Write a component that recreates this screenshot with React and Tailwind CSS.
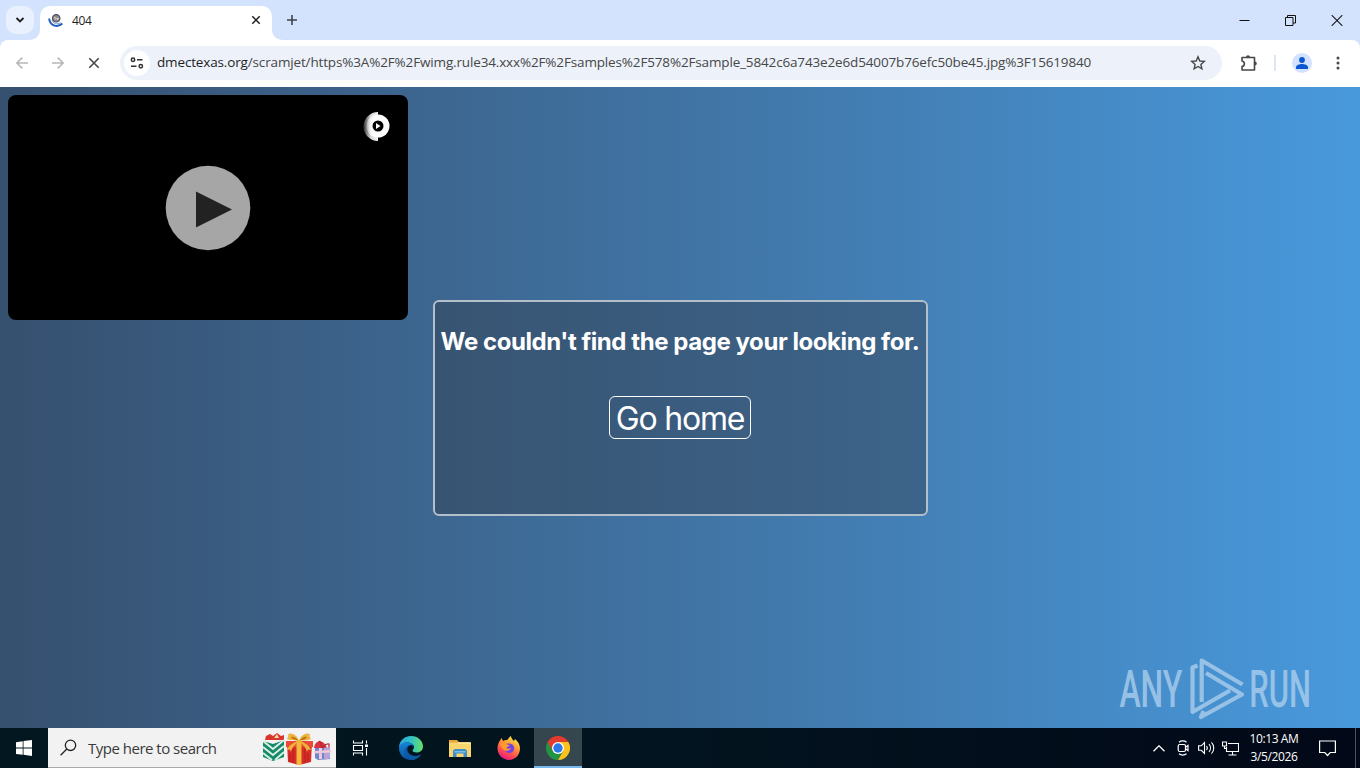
import React from 'react';

const URL_HOST = 'dmectexas.org';
const URL_PATH =
    '/scramjet/https%3A%2F%2Fwimg.rule34.xxx%2F%2Fsamples%2F578%2Fsample_5842c6a743e2e6d54007b76efc50be45.jpg%3F15619840';

function Favicon() {
    return (
        <svg width="16" height="16" viewBox="0 0 16 16" fill="none">
            <path d="M1.200 6.500C1.500 13 9 16.500 14.300 11.500" stroke="#1f5fc0" strokeWidth="2" />
            <path d="M4 8c1 4 5.500 5 8.500 2.500" stroke="#7d97c4" strokeWidth="1" />
            <circle cx="8.200" cy="6.300" r="3.700" fill="#8b8a92" stroke="#4c5160" strokeWidth="1.200" />
            <path d="M6 4.500l2.500 1.500L7 8z" fill="#e6c9a0" />
            <circle cx="9.600" cy="6.800" r="1.100" fill="#d5d9e0" />
        </svg>
    );
}

function TabStrip() {
    return (
        <div className="flex h-10 items-start bg-[#d3e3fd]">
            <button className="mt-1.5 ml-1.5 flex size-7 items-center justify-center rounded-[10px] bg-[#e9f1fe]">
                <svg width="10" height="8" viewBox="0 0 10 8" fill="none" stroke="#1f1f1f" strokeWidth="1.8">
                    <path d="M1.500 2L5 5.500 8.500 2" />
                </svg>
            </button>
            <div className="relative mt-1.5 ml-1.5 flex h-[34px] w-[232px] items-center rounded-t-[10px] bg-white pr-[11px] pb-1.5 pl-2">
                <svg className="absolute bottom-0 -left-2.5" width="10" height="10">
                    <path d="M10 0v10H0A10 10 0 0 0 10 0z" fill="#fff" />
                </svg>
                <svg className="absolute -right-2.5 bottom-0" width="10" height="10">
                    <path d="M0 0v10h10A10 10 0 0 1 0 0z" fill="#fff" />
                </svg>
                <Favicon />
                <span className="ml-2 flex-1 pt-px text-[12px] tracking-[-0.4px] text-[#1f1f1f]">404</span>
                <svg width="10" height="10" viewBox="0 0 10 10" stroke="#1f1f1f" strokeWidth="1.500">
                    <path d="M1.300 1.300l7.400 7.400M8.700 1.300L1.300 8.700" />
                </svg>
            </div>
            <svg className="mt-[15px] ml-[15px]" width="10" height="10" viewBox="0 0 10 10" stroke="#3f4246" strokeWidth="1.6">
                <path d="M5 0v10M0 5h10" />
            </svg>
            <div className="mt-[15px] mr-[17px] ml-auto flex items-center gap-[35px]">
                <svg width="11" height="11" viewBox="0 0 11 11" stroke="#111" fill="none">
                    <path d="M0.500 5.500h10" />
                </svg>
                <svg width="11" height="11" viewBox="0 0 11 11" stroke="#111" fill="none">
                    <path d="M.5 2.500h7.500v8H.5zM2.500 2.500v-2h8v7.500h-2.500" />
                </svg>
                <svg width="12" height="11" viewBox="0 0 12 11" stroke="#111" strokeWidth="1.1" fill="none">
                    <path d="M.7.200l10.600 10.600M11.300.200L.7 10.800" />
                </svg>
            </div>
        </div>
    );
}

function Toolbar() {
    return (
        <div className="bg-[#d3e3fd]">
            <div className="flex h-[47px] items-center rounded-t-[8px] bg-white pr-[17px] pb-0.5 pl-4">
                <svg width="12" height="12" viewBox="0 0 12 12" fill="none" stroke="#b4b6b9" strokeWidth="1.5">
                    <path d="M6.300.600L.9 6l5.400 5.400M1 6h11" />
                </svg>
                <svg className="ml-6" width="12" height="12" viewBox="0 0 12 12" fill="none" stroke="#b4b6b9" strokeWidth="1.5">
                    <path d="M5.700.600L11.100 6l-5.400 5.400M11 6H0" />
                </svg>
                <svg className="ml-6" width="12" height="12" viewBox="0 0 12 12" stroke="#474747" strokeWidth="1.6">
                    <path d="M1.300 1.300l9.400 9.400M10.700 1.300l-9.400 9.400" />
                </svg>
                <div className="ml-5 flex h-[34px] w-[1102px] items-center rounded-full bg-[#edf2fa] pr-4 pl-1">
                    <div className="flex size-[26px] items-center justify-center rounded-full bg-white">
                        <svg width="14" height="12" viewBox="0 0 14 12" fill="none" stroke="#303134" strokeWidth="1.500">
                            <circle cx="3" cy="2.700" r="1.700" />
                            <path d="M7 2.700h5.500M1 9.300h5.500" />
                            <circle cx="10.800" cy="9.300" r="1.700" />
                        </svg>
                    </div>
                    <div className="ml-[7px] flex flex-1 items-center pb-0.5">
                        <span className="text-[13.5px] leading-[18px] tracking-[-0.15px] whitespace-nowrap text-[#474747]">
                            <span className="text-[#1f1f1f]">{URL_HOST}</span>
                            {URL_PATH}
                        </span>
                    </div>
                    <svg width="16" height="16" viewBox="0 0 16 16" fill="none" stroke="#474747" strokeWidth="1.400">
                        <path d="M8 1.800l1.800 4.200 4.500.400-3.400 3 1 4.500L8 11.500l-3.900 2.400 1-4.500-3.400-3 4.500-.400z" />
                    </svg>
                </div>
                <svg className="ml-[18px]" width="18" height="18" viewBox="0 0 18 18" fill="none">
                    <path
                        d="M2 3.500h12.500v12.500H2V12.500c3.200-.500 3.200-5 0-5.500z"
                        stroke="#474747"
                        strokeWidth="1.600"
                        strokeLinejoin="round"
                    />
                    <path d="M6 3.300a2 2 0 0 1 4 0zM14.800 7.500a2 2 0 0 1 0 4z" fill="#474747" />
                </svg>
                <div className="ml-4 h-4 w-0.5 bg-[#dfe6f3]" />
                <div className="ml-4 flex size-5 items-center justify-center rounded-full bg-[#d3e3fd]">
                    <svg width="14" height="14" viewBox="0 0 14 14" fill="#0b57d0">
                        <circle cx="7" cy="4" r="2.900" />
                        <path d="M1 13v-1.600C1 9 4.500 8 7 8s6 1 6 3.400V13z" />
                    </svg>
                </div>
                <svg className="ml-6" width="4" height="16" viewBox="0 0 4 16" fill="#474747">
                    <circle cx="2" cy="2.900" r="1.500" />
                    <circle cx="2" cy="8" r="1.500" />
                    <circle cx="2" cy="13.100" r="1.500" />
                </svg>
            </div>
        </div>
    );
}

function VideoPlayer() {
    return (
        <div className="absolute top-2 left-2 flex h-[225px] w-[400px] items-center justify-center rounded-[8px] bg-black">
            <svg width="86" height="86" viewBox="0 0 86 86">
                <circle cx="43" cy="43" r="42.300" fill="#a6a6a6" />
                <path d="M31 26.500v36l36-18z" fill="#222" />
            </svg>
            <svg className="absolute top-4 right-4" width="32" height="32" viewBox="0 0 32 32">
                <defs>
                    <linearGradient id="discFade">
                        <stop offset="0" stopColor="#fff" stopOpacity="0.200" />
                        <stop offset="0.500" stopColor="#fff" stopOpacity="0.850" />
                        <stop offset="1" stopColor="#fff" stopOpacity="0.950" />
                    </linearGradient>
                    <linearGradient id="discCore">
                        <stop offset="0" stopColor="#fff" stopOpacity="0.300" />
                        <stop offset="0.300" stopColor="#fff" />
                    </linearGradient>
                </defs>
                <path d="M18 1v29A14.500 14.500 0 0 1 18 1z" fill="url(#discFade)" />
                <circle cx="18" cy="15" r="11.500" fill="url(#discCore)" />
                <circle cx="18" cy="15" r="5.500" fill="#000" />
                <path d="M16 12v6l4.500-3z" fill="#fff" />
            </svg>
        </div>
    );
}

function AnyRunLogo() {
    return (
        <svg
            className="absolute right-[45px] bottom-2 overflow-visible"
            width="200"
            height="64"
            viewBox="0 0 200 64"
            fill="none"
            opacity="0.7"
        >
            {/* condensed lettering on both sides of the play mark */}
            <g transform="scale(0.63 1)" fontFamily="Roboto, sans-serif" fontSize="51" fontWeight="500" fill="#b9d6f0">
                <text x="7" y="51" textLength="100" lengthAdjust="spacingAndGlyphs">
                    ANY
                </text>
                <text x="213" y="51" textLength="98" lengthAdjust="spacingAndGlyphs">
                    RUN
                </text>
            </g>
            <g stroke="#b9d6f0" strokeWidth="4.200" strokeLinejoin="round">
                <path d="M86.700 46V4.500L127.500 28.500" />
                <path d="M82.500 9.500l-5 2v44.500L115 34.500" />
                <path d="M91 17l36 21.500L86 61l2.500-6" />
            </g>
        </svg>
    );
}

function NotFoundPage() {
    return (
        <div className="relative flex h-[641px] items-center justify-center bg-linear-to-r from-[#36506f] to-[#4899dc] font-['Inter',sans-serif] text-white">
            <VideoPlayer />
            <div className="flex h-[216px] w-[495px] flex-col items-center rounded-[6px] border-2 border-[#b3bfca] bg-[#333a46]/40">
                <h1 className="mt-6 text-2xl leading-8 font-bold tracking-[-0.44px] whitespace-nowrap">
                    We couldn't find the page your looking for.
                </h1>
                <button className="mt-[38px] flex h-[43px] w-[142px] items-center justify-center rounded-[6px] border border-white pt-[3px] text-[32px] leading-none tracking-[-1.2px] whitespace-nowrap">
                    Go home
                </button>
            </div>
            <AnyRunLogo />
        </div>
    );
}

function Gifts() {
    return (
        <svg width="70" height="34" viewBox="0 0 70 34">
            <path d="M3 9l1-4 4-2 3 2 4-3 4 3 3-1v5z" fill="#d8352c" />
            <path d="M12 7l3-4 2 4z" fill="#f3d9a0" />
            <path d="M1 10l10 3 11-4v17l-11 4-10-4z" fill="#16886c" />
            <path d="M1 10l10 8 11-9M1 16l10 8 11-9M1 22l9 7M22 21l-9 8" stroke="#d8f1df" strokeWidth="2" fill="none" />
            <path d="M52 17c1-9 10-9 13 0z" fill="#d9343f" />
            <path d="M60 17c-1-4-1-6-3-7M60 17c3-3 4-5 7-4v5" stroke="#b52335" strokeWidth="1.200" fill="none" />
            <path d="M53 17h15v11l-12 1-3-2z" fill="#6f86cf" />
            <path d="M62 17l6-1v11l-6 2z" fill="#b9a4da" />
            <path d="M57 17h3v11h-3zM52 20l17-1v2.500l-17 1z" fill="#f1c9d8" />
            <path d="M25 11h25l-1 20-12 3-11-3z" fill="#d92b27" />
            <path d="M24 10h27v6H24z" fill="#ec4b33" />
            <path d="M34.500 9h5v25h-5z" fill="#f2b840" />
            <path d="M37 10c-2-6-7-9-11-7 1 2 0 3-1 5 4 2 8 1 12 2zM37 10c2-6 7-9 11-7-1 2 0 3 1 5-4 2-8 1-12 2z" fill="#eeb23d" />
            <path d="M29 6c3-1 5 1 7 3-3 0-5 0-7-3zM45 6c-3-1-5 1-7 3 3 0 5 0 7-3z" fill="#b87917" />
            <path d="M36 10c-5 2-9 4-11 9l3-.5 1 2.500c1-5 5-8 8-11zM38 10c5 2 9 4 11 9l-3-.5-1 2.500c-1-5-5-8-8-11z" fill="#eeb23d" />
            <path d="M28 22v9M31 18v14M43 18v14M46 22v9" stroke="#a91b1f" strokeWidth="0.800" />
        </svg>
    );
}

function EdgeIcon() {
    return (
        <svg width="24" height="24" viewBox="0 0 24 24">
            <defs>
                <linearGradient id="edgeTop">
                    <stop offset="0" stopColor="#2aa6de" />
                    <stop offset="0.500" stopColor="#31c0c5" />
                    <stop offset="1" stopColor="#6adf66" />
                </linearGradient>
                <linearGradient id="edgeBody" x2="0" y2="1">
                    <stop offset="0" stopColor="#1787d9" />
                    <stop offset="1" stopColor="#0d4f9e" />
                </linearGradient>
            </defs>
            <path d="M0 12C0 5 5 0 12 0s12 5 12 10.500c0 3.500-2.700 6-6 6-3 0-4.500-1-4.500-2 0-.700 1.500-1.300 1.500-3.500C15 8 11.500 6.500 8 6.500 4 6.500.5 9 0 12z" fill="url(#edgeTop)" />
            <path d="M0 12c0-3.500 4-5.500 8-5.500S15 8.500 15 11c0-1-1.500-2-3-2-4 0-5 4-3.500 7 2 4 8 5.500 13.500 2.500C19.500 22 16 24 12 24 5 24 0 19 0 12z" fill="url(#edgeBody)" />
            <path d="M12 9c-4 0-7 3-6.500 7S10 23.600 13 24c4-.300 7.500-2.500 9-5.500-5.500 2.800-11 1.500-13-2.500-1.500-3-.5-6 3-7z" fill="#0c59a4" />
        </svg>
    );
}

function FolderIcon() {
    return (
        <svg width="22" height="19" viewBox="0 0 22 19">
            <path d="M0 1h8l2 2h11v4H0z" fill="#e5a63a" />
            <path d="M0 3.500h22V18H0z" fill="#f9d56e" />
            <path d="M9 3.500h13v1.500H9z" fill="#fbe59d" />
            <path d="M4 18v-6.500L6 10h10l2 1.500V18h-3.500v-3.500h-7V18z" fill="#3f8ecb" />
            <path d="M5.500 12h11v1.500h-11z" fill="#7abde4" />
        </svg>
    );
}

function FirefoxIcon() {
    return (
        <svg width="24" height="24" viewBox="0 0 24 24">
            <defs>
                <linearGradient id="foxBody" x1="0.800" y1="0" x2="0.300" y2="1">
                    <stop offset="0" stopColor="#fff44f" />
                    <stop offset="0.350" stopColor="#ffa436" />
                    <stop offset="0.700" stopColor="#ff4f4b" />
                    <stop offset="1" stopColor="#e31587" />
                </linearGradient>
            </defs>
            <path
                d="M3 4.500l1.500-2.500 1.500 3c1.500-1 3-1.300 4-1 1-.500 1.700-2.500 4-4 0 2 1.200 3.200 3 5l1-2c3.500 3 5 6 5 9.500C23 19 18 24 12 24S.5 19 .5 12.500C.5 9 1.500 6.500 3 4.500z"
                fill="url(#foxBody)"
            />
            <path d="M8 8.500c2.500-1.500 5-1 7.500 0 1.500 1.500 2 3.500 1.500 5-1 3-3 3.800-5 3.500-3-.300-4.500-2.500-4.500-4.500z" fill="#7542e5" />
            <path d="M3 8c3-2 5-2 7 .5l2.500.500c0 1.600-3 1.800-3 3 1 1.200 3 .5 4.500 0-1 2.500-3.500 3.200-5.500 2.700C6 14 4 11 3 8z" fill="#ff9a2e" />
        </svg>
    );
}

function ChromeIcon() {
    return (
        <svg width="24" height="24" viewBox="0 0 24 24">
            <path d="M12 12l5 3-5 9A12 12 0 0 1 1.600 6z" fill="#229342" />
            <path d="M12 6h10.400a12 12 0 0 1-10.400 18l5.200-9z" fill="#fcc21b" />
            <path d="M12 12V6h10.400A12 12 0 0 0 1.600 6l5.200 9z" fill="#e33b2e" />
            <circle cx="12" cy="12" r="6" fill="#fff" />
            <circle cx="12" cy="12" r="4.700" fill="#2b78e8" />
        </svg>
    );
}

function Taskbar() {
    return (
        <div className="flex h-10 items-stretch bg-linear-to-r from-[#02171f] via-[#02141f] to-[#020817] text-white">
            <div className="flex w-12 items-center justify-center">
                <svg width="16" height="16" viewBox="0 0 16 16" fill="#fff">
                    <path d="M0 2.200l6.700-1v6.400H0zM7.500 1.100L16 0v7.600H7.500zM0 8.400h6.700v6.400L0 13.900zM7.500 8.400H16V16l-8.500-1.200z" />
                </svg>
            </div>
            <div className="flex w-[288px] items-center border-b border-[#a9a9a9] bg-[#f2f2f2] pr-1 pl-3">
                <svg width="17" height="17" viewBox="0 0 17 17" fill="none" stroke="#222" strokeWidth="1.300">
                    <circle cx="10.500" cy="6.300" r="5.200" />
                    <path d="M6.800 10L.6 16.200" />
                </svg>
                <span className="ml-[11px] pt-0.5 text-[15px] tracking-[-0.5px] whitespace-nowrap text-[#3a3a3a]">Type here to search</span>
                <div className="ml-auto">
                    <Gifts />
                </div>
            </div>
            <div className="flex w-[50px] items-center justify-center">
                <svg width="18" height="16" viewBox="0 0 18 16" fill="none" stroke="#fff" strokeWidth="1.100">
                    <path d="M1.500.500v2.500h9V.500M1.500 5.500h9v5h-9zM1.500 15.500V13h9v2.500M14.500.500v3M14.500 8v7.500" />
                    <path d="M13 4.500h3v2.500h-3z" fill="#fff" stroke="none" />
                </svg>
            </div>
            <div className="flex w-[49px] items-center justify-center"><EdgeIcon /></div>
            <div className="flex w-[49px] items-center justify-center"><FolderIcon /></div>
            <div className="flex w-[50px] items-center justify-center"><FirefoxIcon /></div>
            <div className="flex w-12 items-center justify-center border-b-2 border-[#76b9ed] bg-[#36464f] pt-0.5"><ChromeIcon /></div>
            <div className="ml-auto flex items-center">
                <svg width="12" height="7" viewBox="0 0 12 7" fill="none" stroke="#fff" strokeWidth="1.300">
                    <path d="M.5 6.300L6 .800l5.500 5.500" />
                </svg>
                <svg className="ml-3" width="12" height="16" viewBox="0 0 12 16" fill="none" stroke="#fff" strokeWidth="1.200">
                    <rect x="1.200" y="4.500" width="7.300" height="7" rx="1.500" />
                    <path d="M8.500 7.300l2.500-1.800v5l-2.500-1.800M2 2.200C4 .500 7.500.500 9.500 2.200M2 13.800c2 1.700 5.500 1.700 7.500 0" />
                </svg>
                <svg className="ml-[9px]" width="17" height="14" viewBox="0 0 17 14" fill="none" stroke="#fff" strokeWidth="1.100">
                    <path d="M.6 4.800h2.700L6.500 1.500v11L3.300 9.300H.6zM8.500 5c1 1.200 1 2.800 0 4M11 3.200c2 2.200 2 5.400 0 7.600M13.500 1.300c3 3.200 3 8.200 0 11.400" />
                </svg>
                <svg className="ml-[7px]" width="17" height="15" viewBox="0 0 17 15" fill="none" stroke="#fff" strokeWidth="1.100">
                    <path d="M6 2.500h10.500v8H4.500V6M10.500 10.500v3.500M6.500 14h8M.5 1h4v4h-4zM2.500 5v2.500h2" />
                </svg>
                <div className="ml-2.5 w-[50px] text-center text-[12px] leading-[18px] tracking-[-0.4px] whitespace-nowrap">
                    <div className="-mx-2">10:13 AM</div>
                    <div className="-mx-2">3/5/2026</div>
                </div>
                <svg className="ml-5" width="17" height="17" viewBox="0 0 17 17" fill="none" stroke="#fff" strokeWidth="1.200">
                    <path d="M.6 1h15.800v11.500h-5.200L8.500 15.500l-2.700-3H.6z" />
                </svg>
                <div className="ml-[19px] h-10 w-[5px] border-l border-[#4c525c]" />
            </div>
        </div>
    );
}

function App() {
    return (
        <div className="h-[768px] w-[1360px] overflow-hidden font-['Open_Sans','Noto_Sans',sans-serif]">
            <TabStrip />
            <Toolbar />
            <NotFoundPage />
            <Taskbar />
        </div>
    );
}

export default App;
